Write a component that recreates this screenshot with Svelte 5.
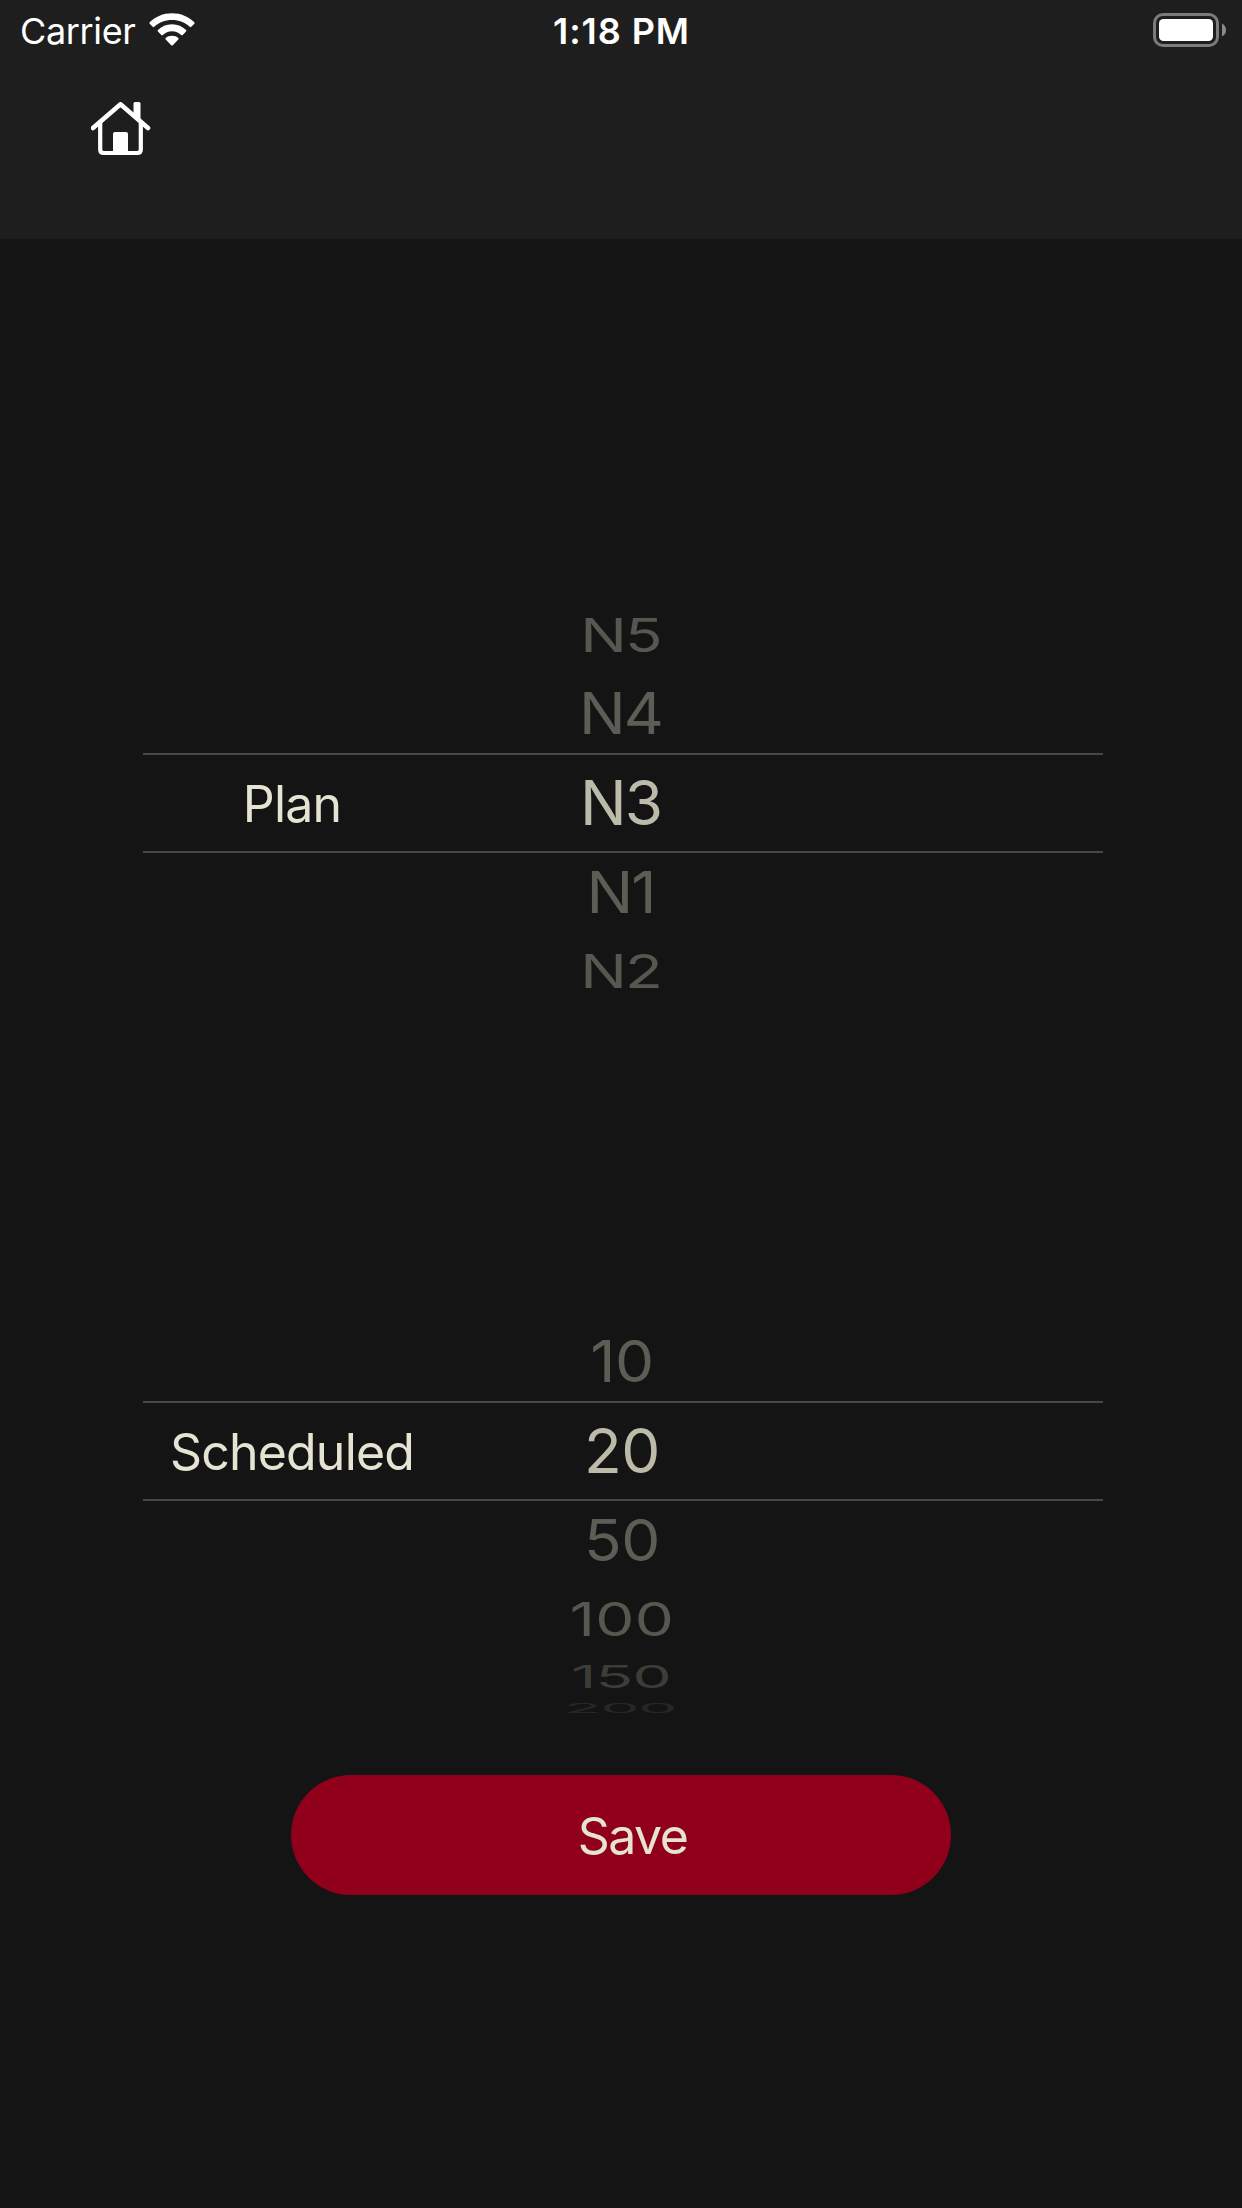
<script>
  const pickers = [
    {
      id: 'plan',
      label: 'Plan',
      rows: [
        { text: 'N5', kind: 'mid' },
        { text: 'N4', kind: 'near', above: true },
        { text: 'N3', kind: 'selected' },
        { text: 'N1', kind: 'near' },
        { text: 'N2', kind: 'mid' }
      ]
    },
    {
      id: 'scheduled',
      label: 'Scheduled',
      rows: [
        { text: '10', kind: 'near', above: true },
        { text: '20', kind: 'selected' },
        { text: '50', kind: 'near' },
        { text: '100', kind: 'mid' },
        { text: '150', kind: 'far' },
        { text: '200', kind: 'edge' }
      ]
    }
  ];
</script>

<div class="screen">
  <header>
    <div class="status">
      <div class="left">
        <span class="carrier">Carrier</span>
        <svg class="wifi" width="46" height="34" viewBox="0 0 46 34" fill="#fff">
          <path d="M23 0.2C31.8 .2 39.6 3.600 45.300 9.200Q46 10 45.300 10.800L42.300 13.800Q41.600 14.500 40.800 13.800C36.200 9.500 30 7 23 7S9.800 9.500 5.200 13.800Q4.400 14.500 3.700 13.800L.7 10.800Q0 10 .7 9.200C6.400 3.600 14.200.2 23 .2Z" />
          <path d="M23 11.200C28.700 11.200 33.600 13.400 37.100 17Q37.800 17.800 37.100 18.600L33.700 22Q32.900 22.700 32.100 22C29.700 19.700 26.600 18.300 23 18.300S16.300 19.700 13.900 22Q13.100 22.700 12.300 22L8.900 18.600Q8.200 17.800 8.900 17C12.400 13.400 17.300 11.200 23 11.200Z" />
          <path d="M23 22.700C25.700 22.700 27.700 23.500 29.300 25.100Q30 25.900 29.300 26.600L23.800 32.200Q23 33 22.200 32.200L16.700 26.600Q16 25.900 16.700 25.100C18.300 23.500 20.300 22.700 23 22.700Z" />
        </svg>
      </div>
      <span class="time">1:18 PM</span>
      <div class="right">
        <svg width="74" height="34" viewBox="0 0 74 34">
          <rect x="1.500" y="1.500" width="63" height="31" rx="8.500" fill="none" stroke="#7c7c7c" stroke-width="3" />
          <rect x="6" y="6" width="54" height="22" rx="4.500" fill="#fff" />
          <path d="M69 10.500Q73 12.500 73 17T69 23.500Z" fill="#8a8a8a" />
        </svg>
      </div>
    </div>
    <svg class="home" width="60" height="54" viewBox="0 0 60 54" fill="none" stroke="#fff" stroke-linecap="round" stroke-linejoin="round">
      <path d="M2 26 29.500 2.300 57 26" stroke-width="4.600" />
      <path d="M9.200 21V47.500Q9.200 51 12.700 51H46.300Q49.800 51 49.800 47.500V21" stroke-width="4.200" />
      <path d="M42.500 1.500Q42.500 0 44 0H48Q49.500 0 49.500 1.500V19L42.500 12.500Z" fill="#fff" stroke="none" />
      <path d="M22 51V32Q22 30 24 30H35Q37 30 37 32V51Z" fill="#fff" stroke="none" />
    </svg>
  </header>

  <main>
    {#each pickers as picker (picker.id)}
      <section class="picker {picker.id}">
        {#each picker.rows as row (row.text)}
          <div class="row {row.kind}" class:above={row.above}>
            {#if row.kind === 'selected'}<span class="label">{picker.label}</span>{/if}
            <span class="value">{row.text}</span>
          </div>
        {/each}
      </section>
    {/each}
    <button>Save</button>
  </main>
</div>

<style>
  :global(body) { background: #141414; }
  .screen {
    width: 1242px;
    height: 2208px;
    overflow: hidden;
    display: flex;
    flex-direction: column;
    background: #141414;
    font-family: Inter, "Liberation Sans", sans-serif;
    font-weight: 400;
  }
  header { height: 239px; background: #1e1e1e; }
  .status {
    height: 60px;
    display: grid;
    grid-template-columns: 1fr auto 1fr;
    align-items: center;
    padding: 2px 15px 0 20px;
    box-sizing: border-box;
    color: #fff;
    font-size: 36px;
    line-height: 44px;
  }
  .left { display: flex; align-items: center; gap: 13px; }
  .carrier { letter-spacing: -0.35px; }
  .wifi { margin-bottom: 3px; }
  .time { font-weight: 600; letter-spacing: 0.9px; margin-right: 4px; }
  .right { display: flex; justify-content: flex-end; margin-bottom: 2px; }
  .home { display: block; margin: 42px 0 0 91px; }
  main {
    flex: 1;
    display: flex;
    flex-direction: column;
    align-items: center;
  }
  .picker { width: 960px; margin-left: 4px; }
  .plan { padding-top: 358px; }
  .scheduled { padding-top: 312px; }
  .row {
    display: grid;
    grid-template-columns: 300px 358px 302px;
    grid-template-rows: 100%;
    align-items: center;
    box-sizing: border-box;
    color: #5e5d55;
  }
  .value {
    grid-column: 2;
    grid-row: 1;
    text-align: center;
    font-size: 62px;
    line-height: 76px;
  }
  .plan .value { letter-spacing: -2px; padding-right: 3px; }
  .scheduled .value { letter-spacing: -0.5px; }
  .label {
    grid-column: 1;
    padding: 2px 2px 0 0;
    text-align: center;
    font-size: 50px;
    line-height: 60px;
    letter-spacing: -0.8px;
    color: #e5e4d3;
  }
  .selected {
    height: 100px;
    border-top: 2px solid #474747;
    border-bottom: 2px solid #474747;
    color: #bcbbaa;
  }
  .near { height: 80px; }
  .near .value { transform: scaleY(0.93); }
  .above .value { padding-top: 2px; }
  .mid { height: 76px; color: #57564f; }
  .mid .value { transform: scaleY(0.76); }
  .scheduled .mid .value { letter-spacing: 0.3px; }
  .far { height: 40px; color: #3d3d38; }
  .scheduled .far .value { transform: scaleY(0.51); letter-spacing: -0.7px; padding-right: 2px; }
  .edge { height: 24px; color: #272725; }
  .scheduled .edge .value { transform: scaleY(0.2); letter-spacing: -1.2px; padding-right: 4px; }
  button {
    width: 660px;
    height: 120px;
    margin-top: 54px;
    padding: 2px 0 0 23px;
    border: 0;
    border-radius: 60px;
    background: #90001a;
    color: #e5e4d3;
    font-family: inherit;
    font-size: 50px;
    letter-spacing: -1.5px;
  }
</style>
